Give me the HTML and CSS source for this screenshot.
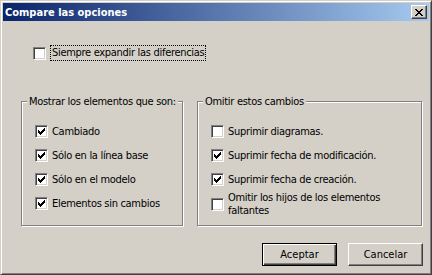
FILE: index.html
```html
<!DOCTYPE html>
<html lang="es">
<head>
  <meta charset="UTF-8">
  <title>Compare las opciones</title>
  <link rel="stylesheet" href="styles.css">
</head>
<body>
  <div class="window">
    <div class="titlebar">
      <span class="title">Compare las opciones</span>
      <button class="close-btn" aria-label="Cerrar">
        <svg width="8" height="7" viewBox="0 0 8 7" shape-rendering="crispEdges">
          <path fill="#000" d="M0 0h2v1H0zM6 0h2v1H6zM1 1h2v1H1zM5 1h2v1H5zM2 2h4v1H2zM3 3h2v1H3zM2 4h4v1H2zM1 5h2v1H1zM5 5h2v1H5zM0 6h2v1H0zM6 6h2v1H6z"/>
        </svg>
      </button>
    </div>

    <div class="content">
      <label class="opt top-opt">
        <span class="box"></span>
        <span class="focus">Siempre expandir las diferencias</span>
      </label>

      <div class="groups">
        <fieldset class="group">
          <legend>Mostrar los elementos que son:</legend>
          <div class="opts">
            <label class="opt"><span class="box checked"></span>Cambiado</label>
            <label class="opt"><span class="box checked"></span>Sólo en la línea base</label>
            <label class="opt"><span class="box checked"></span>Sólo en el modelo</label>
            <label class="opt"><span class="box checked"></span>Elementos sin cambios</label>
          </div>
        </fieldset>

        <fieldset class="group">
          <legend>Omitir estos cambios</legend>
          <div class="opts">
            <label class="opt"><span class="box"></span>Suprimir diagramas.</label>
            <label class="opt"><span class="box checked"></span>Suprimir fecha de modificación.</label>
            <label class="opt"><span class="box checked"></span>Suprimir fecha de creación.</label>
            <label class="opt multi"><span class="box"></span>Omitir los hijos de los elementos<br>faltantes</label>
          </div>
        </fieldset>
      </div>

      <div class="buttons">
        <button class="btn default">Aceptar</button>
        <button class="btn">Cancelar</button>
      </div>
    </div>
  </div>

  <script>
    // draw the classic check glyph into every checked box
    var check = '<svg width="7" height="7" viewBox="0 0 7 7" shape-rendering="crispEdges">' +
      '<path fill="#000" d="M6 0h1v1H6zM5 1h2v1H5zM0 2h1v1H0zM4 2h3v1H4zM0 3h2v1H0zM3 3h3v1H3zM0 4h5v1H0zM1 5h3v1H1zM2 6h1v1H2z"/></svg>';
    document.querySelectorAll('.box.checked').forEach(function (box) {
      box.innerHTML = check;
    });
  </script>
</body>
</html>
```

FILE: styles.css
```css
body {
  margin: 0;
  font-family: "DejaVu Sans", sans-serif;
  font-stretch: condensed;
  font-size: 11px;
  letter-spacing: -0.3px;
  color: #000;
  background-color: #404040;
}

.window {
  box-sizing: border-box;
  width: 432px;
  height: 275px;
  padding: 2px;
  background-color: #d4d0c8;
  border: 1px solid;
  border-color: #d4d0c8 #404040 #404040 #d4d0c8;
  box-shadow: inset 1px 1px #fff, inset -1px -1px #808080;
}

.titlebar {
  height: 18px;
  display: flex;
  align-items: center;
  justify-content: space-between;
  padding: 0 2px;
  background: linear-gradient(to right, #0a246a, #a6caf0);
  color: #fff;
}

.title {
  font-weight: bold;
  font-size: 11px;
  letter-spacing: 0;
}

.close-btn {
  box-sizing: border-box;
  width: 16px;
  height: 14px;
  padding: 0;
  display: flex;
  align-items: center;
  justify-content: center;
  background-color: #d4d0c8;
  border: 1px solid;
  border-color: #fff #404040 #404040 #fff;
  box-shadow: inset -1px -1px #808080;
}

.content {
  padding: 24px 6px 0 18px;
}

.opt {
  display: flex;
  align-items: center;
  gap: 4px;
  line-height: 13px;
}

.top-opt {
  margin-left: 12px;
  height: 16px;
}

.focus {
  border: 1px dotted #000;
  padding: 0 1px;
  line-height: 14px;
}

.box {
  box-sizing: border-box;
  flex: none;
  width: 13px;
  height: 13px;
  padding: 2px;
  background-color: #fff;
  border: 1px solid;
  border-color: #808080 #fff #fff #808080;
  box-shadow: inset 1px 1px #404040, inset -1px -1px #d4d0c8;
}

.box svg {
  display: block;
}

.groups {
  display: grid;
  grid-template-columns: 162px 225px;
  column-gap: 14px;
  height: 131px;
  margin-top: 34px;
}

.group {
  margin: 0;
  padding: 0;
  min-width: 0;
  border: 1px solid #808080;
  box-shadow: inset 1px 1px #fff, 1px 1px #fff;
}

.group legend {
  margin-left: 5px;
  padding: 0 2px;
  line-height: 13px;
  white-space: nowrap;
  background-color: #d4d0c8;
}

.opts {
  display: flex;
  flex-direction: column;
  gap: 11px;
  padding: 17px 0 0 13px;
}

.opt.multi {
  margin-top: -6px;
}

.buttons {
  display: flex;
  justify-content: flex-end;
  gap: 11px;
  margin-top: 17px;
}

.btn {
  box-sizing: border-box;
  width: 75px;
  height: 23px;
  padding: 0;
  font: inherit;
  background-color: #d4d0c8;
  border: 1px solid;
  border-color: #fff #404040 #404040 #fff;
  box-shadow: inset -1px -1px #808080;
}

.btn.default {
  border-color: #000;
  box-shadow: inset 1px 1px #fff, inset -1px -1px #404040, inset -2px -2px #808080;
}
```
